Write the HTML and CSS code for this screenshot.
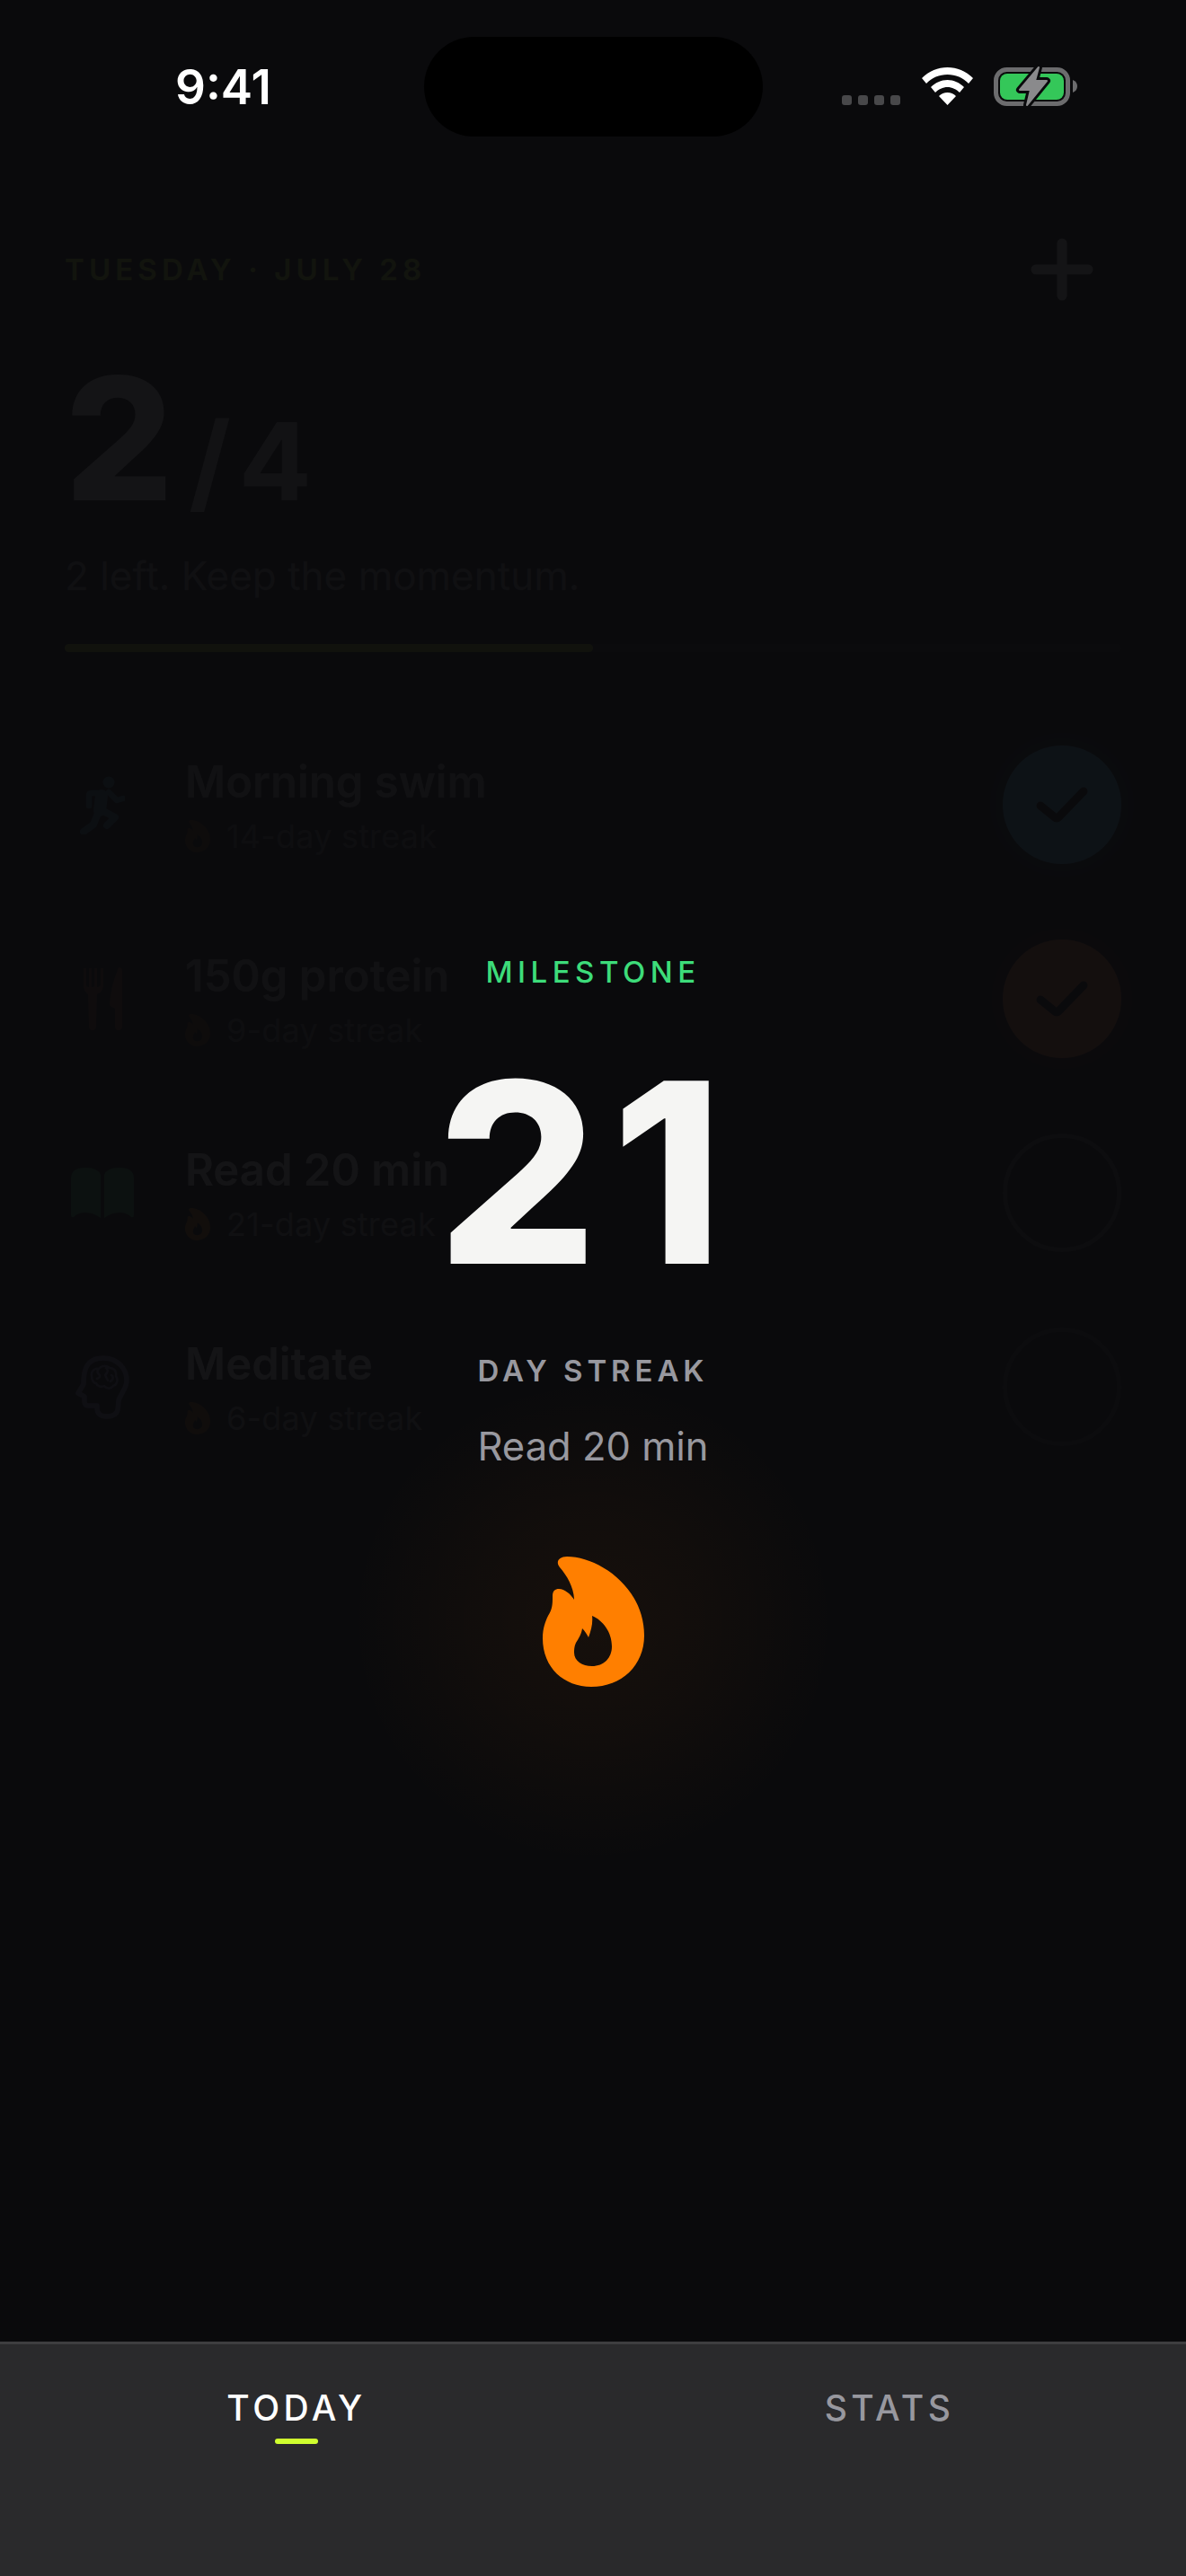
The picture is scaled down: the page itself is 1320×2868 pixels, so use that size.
FILE: index.html
```html
<!DOCTYPE html>
<html>
  <head>
    <title>Today</title>
    <link rel="stylesheet" href="styles.css">
  </head>
  <body>
    <div class="phone">
      <main class="today">
        <header class="today-head">
          <div class="date">TUESDAY · JULY 28</div>
          <svg class="plus" viewBox="0 0 70 70"><path d="M35 6v58M6 35h58"/></svg>
        </header>
        <div class="count"><span class="count-done">2</span><span class="count-total">/4</span></div>
        <p class="left">2 left. Keep the momentum.</p>
        <div class="progress"><div class="progress-fill"></div></div>

        <ul class="tasks">
          <li class="task task-done">
            <div class="task-icon">
              <svg class="ic-swim" viewBox="0 0 50 66">
                <circle class="ic-fill" cx="32" cy="8" r="6.500"/>
                <path d="M24 23 22 39" stroke-width="14"/>
                <path d="M20 20H13Q10 20 10 23V34M32 19 41 28 48 26" stroke-width="6.500"/>
                <path d="M21 40 15 55 4 63M26 40 39 47 30 56" stroke-width="8"/>
              </svg>
            </div>
            <div class="task-text">
              <div class="task-title">Morning swim</div>
              <div class="task-streak">
                <svg class="flame-sm" viewBox="0 0 113 145"><use href="#flame"/></svg>
                <span>14-day streak</span>
              </div>
            </div>
            <div class="check check-blue"><svg viewBox="0 0 132 132"><path d="M42 67l16 13q2 2 4 0l28-29"/></svg></div>
          </li>
          <li class="task task-done">
            <div class="task-icon">
              <svg class="ic-food" viewBox="0 0 43 70"><path d="M0 1h3v18q0 3 3 3V1h3v21q2 0 3-1V1h3v21q3 0 4-3V1h3v19q0 7-7 10l-1 36q0 4-4 4t-4-4l-1-36Q0 27 0 20zM39 0q4 0 4 4v62q0 4-4 4t-4-4V46l-4-2q-2-1-2-3 1-20 10-41z"/></svg>
            </div>
            <div class="task-text">
              <div class="task-title">150g protein</div>
              <div class="task-streak">
                <svg class="flame-sm" viewBox="0 0 113 145"><use href="#flame"/></svg>
                <span>9-day streak</span>
              </div>
            </div>
            <div class="check check-orange"><svg viewBox="0 0 132 132"><path d="M42 67l16 13q2 2 4 0l28-29"/></svg></div>
          </li>
          <li class="task task-hot">
            <div class="task-icon">
              <svg class="ic-book" viewBox="0 0 70 56"><path d="M0 12Q0 0 16 0 30 0 33 8V56Q25 50 16 50 8 50 3 55 0 56 0 53zM70 12Q70 0 54 0 40 0 37 8V56Q45 50 54 50 62 50 67 55 70 56 70 53z"/></svg>
            </div>
            <div class="task-text">
              <div class="task-title">Read 20 min</div>
              <div class="task-streak">
                <svg class="flame-sm" viewBox="0 0 113 145"><use href="#flame"/></svg>
                <span>21-day streak</span>
              </div>
            </div>
            <div class="check"></div>
          </li>
          <li class="task">
            <div class="task-icon">
              <svg class="ic-head" viewBox="0 0 60 71">
                <path class="ic-head-line" d="M31 3C46 3 57 14 57 28 57 37 50 43 48 50L47 61Q45 68 35 68 25 68 24 60V56H14Q10 56 10 51V46L3 42 9 32C9 20 10 3 31 3z"/>
                <path class="ic-head-thin" d="M18 23C17 17 22 14 26 15 29 11 35 11 38 14 43 14 46 18 45 23 48 27 46 33 42 34 39 38 34 37 32 34 28 36 24 34 23 31 20 31 18 27 18 23zM26 15Q23 18 26 21T24 26M34 14Q38 17 33 22L36 28M40 22Q44 25 39 29"/>
              </svg>
            </div>
            <div class="task-text">
              <div class="task-title">Meditate</div>
              <div class="task-streak">
                <svg class="flame-sm" viewBox="0 0 113 145"><use href="#flame"/></svg>
                <span>6-day streak</span>
              </div>
            </div>
            <div class="check check-last"></div>
          </li>
        </ul>
      </main>

      <div class="scrim"></div>

      <div class="statusbar">
        <div class="time">9:41</div>
        <div class="island"></div>
        <div class="status-icons">
          <div class="signal"><i></i><i></i><i></i><i></i></div>
          <svg class="wifi" viewBox="0 0 57 42"><path d="M28.500 0C39 0 49 4 57 12l-5 6C46 11.500 37.500 8 28.500 8S11 11.500 5 18L0 12C8 4 18 0 28.500 0zM28.500 14c7 0 13.500 3 18.500 8l-5 6c-3.500-3.500-8.500-6-13.500-6S18.500 24.500 15 28l-5-6c5-5 11.500-8 18.500-8zM28.500 28c3.500 0 7 1.500 9.500 4l-9.500 10L19 32c2.500-2.500 6-4 9.500-4z"/></svg>
          <svg class="battery" viewBox="0 0 93 46">
            <rect class="batt-shell" x="2.500" y="4.500" width="80" height="38" rx="12"/>
            <rect class="batt-fill" x="7" y="9" width="71" height="29" rx="8"/>
            <path class="batt-nub" d="M88 16q5 2 5 7t-5 7z"/>
            <path class="batt-halo" d="M50 2 29 27H41L37 44 59 17H46z"/>
            <path class="batt-bolt" d="M50 2 29 27H41L37 44 59 17H46z"/>
          </svg>
        </div>
      </div>

      <section class="milestone">
        <div class="glow"></div>
        <div class="ms-label">MILESTONE</div>
        <div class="ms-number">21</div>
        <div class="ms-unit">DAY STREAK</div>
        <div class="ms-habit">Read 20 min</div>
        <svg class="flame-lg" viewBox="0 0 113 145">
          <path id="flame" fill-rule="evenodd" d="M27 0C62 0 113 34 113 88c0 33-25 57-59 57C24 145 0 124 0 91c0-11 3-19 6-25 5-8 5-13 5-22 0-6 3-8 7-8 7 0 14 7 17 12 0-13-8-27-16-36-5-6-1-12 8-12zM55 66C56 74 54 82 51 90 49 86 47 83 44 80 43 87 40 91 37 96 35 100 35 104 35 107 35 116 44 122 55 122 68 122 77 113 77 100 77 84 67 71 55 66z"/>
        </svg>
      </section>

      <nav class="tabbar">
        <div class="tab tab-on">TODAY<i class="tab-mark"></i></div>
        <div class="tab">STATS</div>
      </nav>
    </div>
  </body>
</html>
```

FILE: styles.css
```css
* { box-sizing: border-box; }
html, body { margin: 0; padding: 0; background: #0a0a0c; }
.phone {
  position: relative;
  width: 1320px;
  height: 2868px;
  overflow: hidden;
  font-family: Inter, "Liberation Sans", sans-serif;
  color: #f5f5f3;
}

/* habit list, sits under the scrim */
.today { padding: 265px 72px 0; }
.today-head {
  display: flex;
  justify-content: space-between;
  align-items: center;
  height: 70px;
}
.date {
  font-size: 33px;
  font-weight: 600;
  letter-spacing: 5.100px;
  color: #d0ff2f;
}
.plus { width: 70px; height: 70px; margin-right: 31px; }
.plus path { fill: none; stroke: #f5f5f3; stroke-width: 11px; stroke-linecap: round; }
.count {
  display: flex;
  align-items: baseline;
  margin-top: 58px;
  height: 190px;
  line-height: 190px;
}
.count-done { font-size: 190px; font-weight: 800; }
.count-total { font-size: 120px; font-weight: 700; margin-left: 17px; letter-spacing: 9px; color: #c8c8cc; }
.left {
  margin: 28px 0 0;
  font-size: 44px;
  line-height: 60px;
  color: #98989f;
}
.progress {
  height: 9px;
  margin-top: 46px;
  border-radius: 5px;
  background: #1c1c1e;
}
.progress-fill { width: 50%; height: 100%; border-radius: 5px; background: #d0ff2f; opacity: .8; }

.tasks { list-style: none; margin: 62px 0 0; padding: 0; }
.task { display: flex; align-items: center; height: 216px; }
.task-icon { display: flex; justify-content: center; width: 84px; margin-right: 50px; }
.task-text { flex: 1; padding-top: 4px; }
.task-done .task-text { opacity: .75; }
.task-title { font-size: 49px; font-weight: 600; line-height: 60px; color: #f5f5f3; }
.task-streak { display: flex; align-items: center; gap: 18px; margin-top: 6px; font-size: 36px; line-height: 48px; letter-spacing: .2px; color: #8e8e93; }
.flame-sm { width: 28px; height: 36px; fill: #ff7f00; opacity: .6; }
.task-done .flame-sm { opacity: .5; }
.task-hot .flame-sm { opacity: .8; }
.ic-swim { width: 50px; height: 66px; fill: none; stroke: #5ac8fa; stroke-linecap: round; stroke-linejoin: round; opacity: .6; }
.ic-fill { fill: #5ac8fa; stroke: none; }
.ic-food { width: 43px; height: 70px; fill: #ff7a45; opacity: .45; }
.ic-book { width: 70px; height: 56px; fill: #3ddc7a; opacity: .8; }
.ic-head { width: 60px; height: 71px; fill: none; stroke: #b9a9ff; opacity: .7; }
.ic-head-line { stroke-width: 5.500px; stroke-linejoin: round; }
.ic-head-thin { stroke-width: 2.500px; stroke-linejoin: round; stroke-linecap: round; }
.check { width: 132px; height: 132px; border-radius: 50%; border: 5px solid #48484a; }
.check-last { border-color: #333335; }
.check svg { display: block; width: 132px; height: 132px; }
.check path { fill: none; stroke: #0a0a0c; stroke-width: 9px; stroke-linecap: round; stroke-linejoin: round; }
.check-blue, .check-orange { border: 0; }
.check-blue { background: #5ac8fa; box-shadow: 0 0 40px rgba(90, 200, 250, .25); }
.check-orange { background: #ff7a45; box-shadow: 0 0 40px rgba(255, 122, 69, .25); }

/* dim layer */
.scrim { position: absolute; inset: 0; background: rgba(10, 10, 12, .96); }

.statusbar { position: absolute; top: 0; left: 0; right: 0; height: 160px; }
.time {
  position: absolute;
  left: 195px;
  top: 65px;
  font-size: 53px;
  line-height: 64px;
  font-weight: 600;
  color: #fff;
}
.island {
  position: absolute;
  left: 472px;
  top: 41px;
  width: 377px;
  height: 111px;
  border-radius: 56px;
  background: #000;
}
.status-icons { position: absolute; top: 73px; left: 937px; display: flex; align-items: flex-end; height: 46px; }
.signal { display: flex; gap: 7px; margin-bottom: 2px; margin-right: 24px; }
.signal i { width: 11px; height: 11px; border-radius: 3px; background: #48484a; }
.wifi { width: 57px; height: 42px; fill: #fff; margin-bottom: 2px; margin-right: 23px; }
.battery { width: 93px; height: 46px; overflow: visible; }
.batt-shell { fill: none; stroke: #6c6c6e; stroke-width: 5px; }
.batt-fill { fill: #34c759; }
.batt-nub { fill: #6c6c6e; }
.batt-halo { fill: #0a0a0c; stroke: #0a0a0c; stroke-width: 8px; stroke-linejoin: round; }
.batt-bolt { fill: #8a8a8c; stroke: #8a8a8c; stroke-width: 2px; stroke-linejoin: round; }

.milestone {
  position: absolute;
  top: 1060px;
  left: 0;
  right: 0;
  display: flex;
  flex-direction: column;
  align-items: center;
}
.glow {
  position: absolute;
  left: 390px;
  top: 475px;
  width: 540px;
  height: 540px;
  border-radius: 50%;
  background: radial-gradient(closest-side, rgba(255, 122, 0, .05), rgba(255, 122, 0, .03) 45%, rgba(255, 122, 0, 0));
}
.ms-label {
  position: relative;
  font-size: 33px;
  line-height: 44px;
  font-weight: 500;
  letter-spacing: 5.500px;
  color: #3ddc7a;
}
.ms-number {
  position: relative;
  margin-top: 52px;
  margin-right: 13px;
  font-size: 280px;
  line-height: 300px;
  font-weight: 850;
  letter-spacing: 16px;
  color: #f5f5f3;
}
.ms-unit {
  position: relative;
  margin-top: 48px;
  font-size: 33px;
  line-height: 44px;
  font-weight: 600;
  letter-spacing: 4.900px;
  color: #98989f;
}
.ms-habit {
  position: relative;
  margin-top: 34px;
  font-size: 43.500px;
  line-height: 56px;
  color: #98989f;
}
.flame-lg { position: relative; width: 113px; height: 145px; margin-top: 95px; fill: #ff7f00; }

.tabbar {
  position: absolute;
  left: 0;
  right: 0;
  bottom: 0;
  height: 261px;
  display: flex;
  background: #2a2a2c;
  border-top: 3px solid #3e3e40;
}
.tab {
  position: relative;
  flex: 1;
  padding-top: 43px;
  text-align: center;
  font-size: 39px;
  line-height: 56px;
  font-weight: 500;
  letter-spacing: 4.500px;
  color: #98989f;
}
.tab-on { color: #fff; }
.tab-mark {
  position: absolute;
  left: 50%;
  top: 105px;
  width: 48px;
  height: 6px;
  margin-left: -24px;
  border-radius: 3px;
  background: #d0ff2f;
}
```
